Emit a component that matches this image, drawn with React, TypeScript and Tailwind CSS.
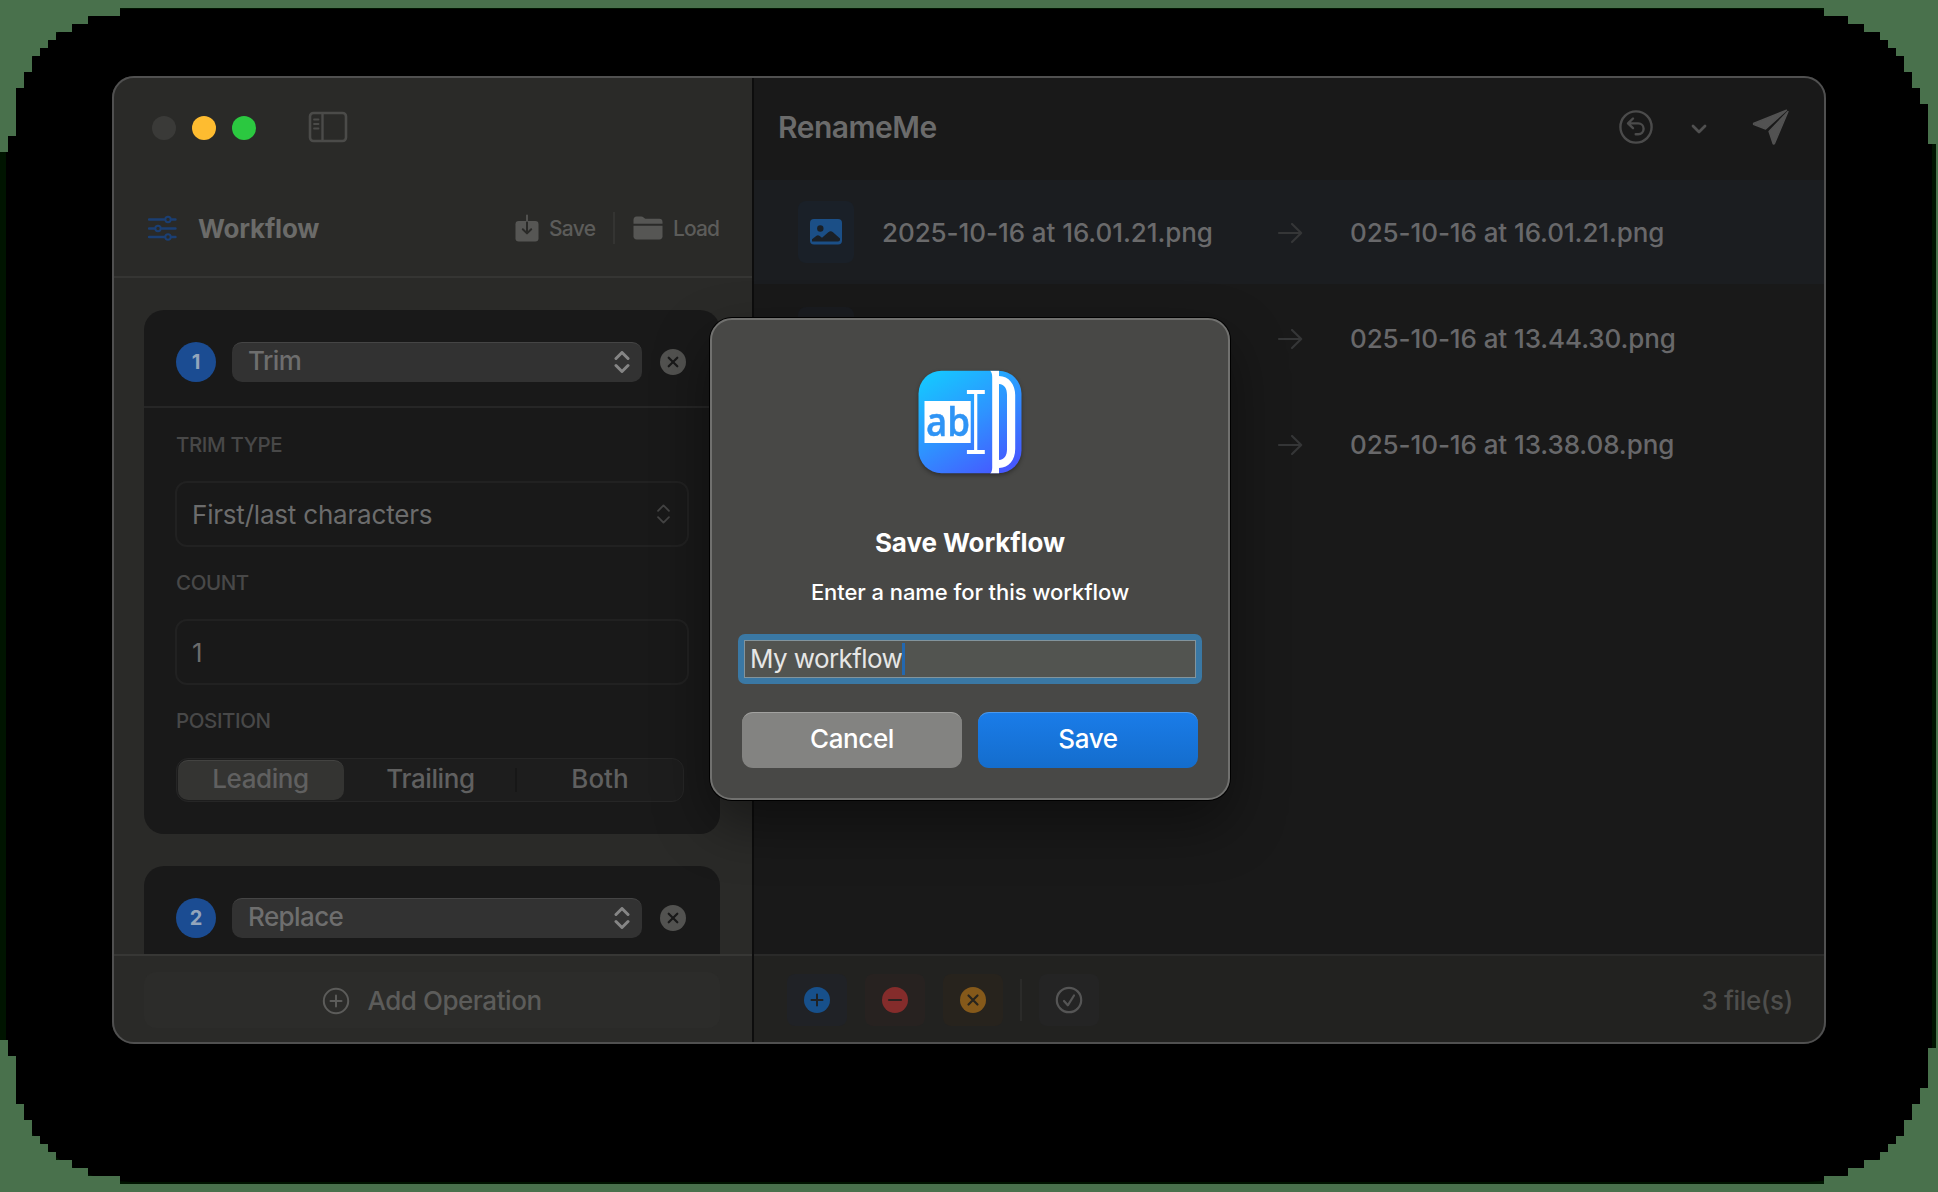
import type { ReactNode } from "react";

function ChevronsUpDown({ className, stroke }: { className: string; stroke: number }) {
  return (
    <svg viewBox="0 0 16 22" className={className} fill="none" stroke="currentColor" strokeWidth={stroke} strokeLinecap="round" strokeLinejoin="round">
      <path d="M2 7.5 8 1.5l6 6M2 14.5l6 6 6-6" />
    </svg>
  );
}

function CloseBadge() {
  return (
    <svg viewBox="0 0 26 26" className="size-[26px] shrink-0">
      <circle cx="13" cy="13" r="13" fill="#525250" />
      <path d="m8.7 8.7 8.6 8.6M17.3 8.7l-8.6 8.6" stroke="#191919" strokeWidth="2.2" strokeLinecap="round" />
    </svg>
  );
}

function SidebarIcon() {
  return (
    <svg viewBox="0 0 40 32" className="h-8 w-10 text-[#4b4b49]" fill="none" stroke="currentColor">
      <rect x="2" y="2" width="36" height="28" rx="3.5" strokeWidth="2.6" />
      <path d="M14.5 2v28" strokeWidth="2.4" />
      <path d="M6 8.5h4.5M6 13h4.5M6 17.5h4.5" strokeWidth="1.8" strokeLinecap="round" />
    </svg>
  );
}

function SlidersIcon() {
  return (
    <svg viewBox="0 0 30 26" className="h-[26px] w-[30px]" fill="none" stroke="#1b3f73" strokeWidth="2.4" strokeLinecap="round">
      <path d="M1 4.5h15.5M23.5 4.5h4M1 13.5h5.5M13.5 13.5h14M1 22h15.5M23.5 22h4" />
      <circle cx="20" cy="4.5" r="2.7" strokeWidth="2" />
      <circle cx="10" cy="13.5" r="2.7" strokeWidth="2" />
      <circle cx="20" cy="22" r="2.7" strokeWidth="2" />
    </svg>
  );
}

function SaveIcon() {
  return (
    <svg viewBox="0 0 24 28" className="h-7 w-6">
      <rect x="0.5" y="7" width="23" height="20.5" rx="3.2" fill="#565654" />
      <path d="M12 7v12M7.8 15.2 12 19.4l4.2-4.2" fill="none" stroke="#2a2a28" strokeWidth="2" strokeLinecap="round" strokeLinejoin="round" />
      <path d="M12 1.5V7" stroke="#565654" strokeWidth="1.8" strokeLinecap="round" />
    </svg>
  );
}

function FolderIcon() {
  return (
    <svg viewBox="0 0 30 24" className="h-6 w-[30px]" fill="#565654">
      <path d="M.5 7.700V3.700C.5 1.800 1.700.5 3.600.5h4.600c1 0 1.700.300 2.400.900l1 .900c.5.400.900.5 1.600.5h13.200c1.900 0 3.100 1.200 3.100 3.100v1.800z" />
      <path d="M.5 9.700h29v10.600c0 1.900-1.200 3.200-3.100 3.200H3.600c-1.900 0-3.100-1.300-3.100-3.200z" />
    </svg>
  );
}

function ImageIcon() {
  return (
    <svg viewBox="0 0 32 26" className="h-[26px] w-8">
      <rect width="32" height="25.5" rx="4" fill="#1b4f87" />
      <circle cx="10.3" cy="9.5" r="3.2" fill="#1a2027" />
      <path d="M2 22.500v-2.200l4.500-3.600c.900-.700 2-.700 2.900 0l2.600 2 6.300-5.400c1.500-1.300 3.200-1.300 4.700 0l7 6.200v1c0 1.300-.700 2-2 2z" fill="#1a2027" />
    </svg>
  );
}

function ArrowIcon() {
  return (
    <svg viewBox="0 0 26 22" className="mt-px h-[22px] w-[26px] shrink-0" fill="none" stroke="#353637" strokeWidth="2.2" strokeLinecap="round" strokeLinejoin="round">
      <path d="M2 11h22M15 2l9.200 9-9.200 9" />
    </svg>
  );
}

function UndoIcon() {
  return (
    <svg viewBox="0 0 36 36" className="size-9" fill="none" stroke="#4b4b4b" strokeLinecap="round" strokeLinejoin="round">
      <circle cx="18" cy="18" r="15.6" strokeWidth="2.4" />
      <path d="M15 9.500 10 14.400l5 4.800M10.500 14.400h9.700c3.200 0 5.400 2.400 5.400 5.400s-2.200 5.400-5.400 5.400h-2.500" strokeWidth="2.4" />
    </svg>
  );
}

function PlaneIcon() {
  return (
    <svg viewBox="0 0 38 38" className="size-[38px]" fill="#525252" stroke="#525252" strokeWidth="1.4" strokeLinejoin="round">
      <path d="M34.500 2.200 2 15.200c-.700.400-.700 1 0 1.400l11.600 4.400z" />
      <path d="M36 3.600 17 23.400l4 12c.300.800 1.100.800 1.500 0z" />
    </svg>
  );
}

function AppIcon() {
  return (
    <svg viewBox="0 0 104 104" className="size-[104px] drop-shadow-[0_2px_2px_rgba(0,0,0,0.35)]">
      <defs>
        <linearGradient id="tile" x1="0.15" y1="0.05" x2="0.75" y2="1">
          <stop offset="0" stopColor="#17c4ff" />
          <stop offset="0.5" stopColor="#2e93ff" />
          <stop offset="1" stopColor="#4659ff" />
        </linearGradient>
        <clipPath id="tile-shape">
          <rect x="0.5" y="0.7" width="103" height="102.6" rx="23" />
        </clipPath>
      </defs>
      <g clipPath="url(#tile-shape)">
        <rect width="104" height="104" fill="url(#tile)" />
        <rect x="6.5" y="31" width="46.2" height="42" fill="#fff" />
        <text x="8" y="66" fontFamily="Open Sans, sans-serif" fontWeight="600" fontSize="39.5" textLength="44" lengthAdjust="spacingAndGlyphs" fill="#2f94f5" stroke="#2f94f5" strokeWidth="0.5">ab</text>
        <path d="M48.900 20h17.900v4h-7.500v56h7.500v4H48.900v-4h7.200V24h-7.200z" fill="#fff" />
        <path d="M72 .5h9v5.500c10 .300 16.200 8.500 16.200 19v54c0 11-6.200 18.800-16.200 19v6h-9c1.600-1.500 2.200-3.500 2.200-6.500V7c0-3-.600-5-2.200-6.500zM81 14v76c5.500-.300 8-4.500 8-11V25c0-6.500-2.500-10.700-8-11z" fill="#fff" />
      </g>
    </svg>
  );
}

function OperationHeader({ index, name }: { index: number; name: string }) {
  return (
    <div className="flex h-24 items-start pt-8 pl-8">
      <div className="flex size-10 shrink-0 items-center justify-center rounded-full bg-[#1b4c92] text-[20px] font-bold text-[#93a5bb]">{index}</div>
      <div className="mr-[18px] ml-4 flex h-10 w-[410px] items-center justify-between rounded-[10px] border-t border-[#454545] bg-[#323232] pr-3 pb-px pl-4 text-[26px] font-medium tracking-[-0.6px] text-[#6e6e6e]">
        <span className="pb-0.5">{name}</span>
        <ChevronsUpDown className="h-[22px] w-4 text-[#858585]" stroke={3} />
      </div>
      <div className="flex h-10 items-center">
        <CloseBadge />
      </div>
    </div>
  );
}

function Label({ children }: { children: ReactNode }) {
  return <div className="flex h-6 items-center pt-0.5 text-[20.5px] font-medium tracking-[-0.4px] text-[#484848]">{children}</div>;
}

function FileRow({ from, to, selected }: { from?: string; to: string; selected?: boolean }) {
  return (
    <div className={selected ? "flex h-[104px] items-center bg-[#1b1d20] pl-[44px]" : "flex h-[104px] items-center pl-[44px]"}>
      <div className={selected ? "flex h-[62px] w-14 items-center justify-center rounded-lg bg-[#1a2028]" : "flex h-[62px] w-14 items-center justify-center rounded-lg bg-[#1a1c20]"}>
        <ImageIcon />
      </div>
      <div className="ml-7 w-[395px] pt-0.5 text-[26px] font-medium tracking-[-0.07px] text-[#6a6a6b]">{from}</div>
      <ArrowIcon />
      <div className="ml-[47px] pt-0.5 text-[26px] font-medium tracking-[-0.09px] text-[#68686a]">{to}</div>
    </div>
  );
}

function ToolButton({ tint, children }: { tint: string; children: ReactNode }) {
  return <div className={`flex h-[52px] w-[60px] items-center justify-center rounded-lg ${tint}`}>{children}</div>;
}

function Dialog() {
  return (
    <div className="absolute top-[242px] left-[598px] flex h-[482px] w-[520px] flex-col items-center rounded-[22px] border-2 border-[#71716f] bg-[#484846] shadow-[0_0_0_1px_#000,0_24px_56px_rgba(0,0,0,0.42)]">
      <div className="mt-[50px] h-[104px]">
        <AppIcon />
      </div>
      <div className="mt-[53px] flex h-8 items-center text-[26px] font-bold tracking-[-0.08px] text-white">Save Workflow</div>
      <div className="mt-[19px] flex h-7 items-center text-[22px] font-medium tracking-[-0.07px] text-white">Enter a name for this workflow</div>
      <div className="mt-7 h-[50px] w-[464px] rounded-[7px] bg-[#3a78a4] p-1.5">
        <div className="flex h-full items-center border border-[#82949c] bg-[#525450] pl-[5px] text-[26px] tracking-[-0.6px] text-[#e6e6e5]">
          <span>My workflow</span>
          <span className="h-8 w-[3px] bg-[#2368b0]" />
        </div>
      </div>
      <div className="mt-7 flex gap-4 text-[26px] font-medium tracking-[-0.4px] text-white">
        <button className="flex h-14 w-[220px] items-center justify-center rounded-[11px] border-t border-[#a2a2a0] bg-[#838381] pb-1">Cancel</button>
        <button className="flex h-14 w-[220px] items-center justify-center rounded-[11px] border-t border-[#4a99ef] bg-linear-to-b from-[#1a7ce8] to-[#146dcd] pb-1">Save</button>
      </div>
    </div>
  );
}

function Sidebar() {
  return (
    <aside className="flex w-[640px] flex-col bg-[#2a2a28]">
      <div className="flex h-[104px] items-center pl-10">
        <div className="flex gap-4">
          <span className="size-6 rounded-full bg-[#3a3a38]" />
          <span className="size-6 rounded-full bg-[#febc30]" />
          <span className="size-6 rounded-full bg-[#2bc840]" />
        </div>
        <div className="ml-[52px] pb-0.5">
          <SidebarIcon />
        </div>
      </div>
      <div className="flex h-24 items-center pl-9">
        <SlidersIcon />
        <div className="ml-5 w-[317px] shrink-0 pt-0.5 text-[26px] font-bold tracking-[-0.2px] text-[#6b6b69]">Workflow</div>
        <SaveIcon />
        <span className="ml-[10px] w-16 shrink-0 text-[21px] font-medium tracking-[-0.7px] text-[#5c5c5a]">Save</span>
        <span className="h-8 w-0.5 bg-[#343432]" />
        <span className="ml-[18px]">
          <FolderIcon />
        </span>
        <span className="ml-[10px] text-[21px] font-medium tracking-[-0.9px] text-[#5c5c5a]">Load</span>
      </div>
      <div className="h-0.5 bg-[#353533]" />
      <div className="flex h-[676px] flex-col gap-8 overflow-hidden px-8 pt-8">
        <section className="h-[524px] shrink-0 rounded-[20px] bg-[#191919]">
          <OperationHeader index={1} name="Trim" />
          <div className="h-0.5 bg-[#262626]" />
          <div className="flex flex-col px-8 pt-6">
            <Label>TRIM TYPE</Label>
            <div className="-ml-px mt-[25px] flex h-[66px] w-[514px] items-center justify-between rounded-xl border-2 border-[#212121] pr-4 pl-[15px] text-[26px] tracking-[-0.2px] text-[#6c6c6c]">
              <span className="pt-0.5">First/last characters</span>
              <ChevronsUpDown className="h-5 w-[15px] text-[#444]" stroke={2} />
            </div>
            <div className="mt-[23px]">
              <Label>COUNT</Label>
            </div>
            <div className="-ml-px mt-[25px] flex h-[66px] w-[514px] items-center rounded-xl border-2 border-[#212121] pt-0.5 pl-[15px] text-[26px] text-[#6c6c6c]">1</div>
            <div className="mt-[23px]">
              <Label>POSITION</Label>
            </div>
            <div className="mt-[26px] flex h-11 w-[508px] items-center rounded-xl border border-[#262626] bg-[#1d1d1d] text-[26px] font-medium tracking-[-0.4px] text-[#606060]">
              <div className="ml-px flex h-10 w-[166px] items-center justify-center rounded-[10px] border-t border-[#434341] bg-[#343432] pr-px pb-[3px]">Leading</div>
              <div className="flex h-10 w-[171px] items-center justify-center pb-0.5 pl-0.5">Trailing</div>
              <div className="h-6 w-0.5 bg-[#171717]" />
              <div className="flex h-10 flex-1 items-center justify-center pb-0.5 tracking-normal">Both</div>
            </div>
          </div>
        </section>
        <section className="h-[300px] shrink-0 rounded-[20px] bg-[#191919]">
          <OperationHeader index={2} name="Replace" />
        </section>
      </div>
      <div className="h-0.5 bg-[#373735]" />
      <div className="px-8 pt-4">
        <div className="flex h-14 items-center justify-center rounded-xl bg-[#2c2c2a] pt-0.5 text-[26px] font-medium tracking-[-0.45px] text-[#5c5c5a]">
          <svg viewBox="0 0 28 28" className="mr-[17px] size-7" fill="none" stroke="currentColor" strokeWidth="2" strokeLinecap="round">
            <circle cx="14" cy="14" r="12.2" />
            <path d="M14 8.500v11M8.500 14h11" />
          </svg>
          Add Operation
        </div>
      </div>
    </aside>
  );
}

function Main() {
  return (
    <main className="flex w-[1072px] flex-col bg-[#191919]">
      <div className="flex h-[104px] items-center pr-9 pb-0.5 pl-6">
        <h1 className="flex-1 text-[30px] font-semibold tracking-[-0.5px] text-[#6b6b6b]">RenameMe</h1>
        <UndoIcon />
        <svg viewBox="0 0 16 10" className="mt-[3px] mr-[45px] ml-[37px] h-2.5 w-4" fill="none" stroke="#505050" strokeWidth="2.8" strokeLinecap="round" strokeLinejoin="round">
          <path d="m2 2 6 6 6-6" />
        </svg>
        <PlaneIcon />
      </div>
      <div className="flex flex-1 flex-col gap-0.5">
        <FileRow selected from="2025-10-16 at 16.01.21.png" to="025-10-16 at 16.01.21.png" />
        <FileRow to="025-10-16 at 13.44.30.png" />
        <FileRow to="025-10-16 at 13.38.08.png" />
      </div>
      <div className="flex h-[90px] items-center border-t-2 border-[#2a2a29] bg-[#222220] pr-[33px] pl-[33px]">
        <div className="flex gap-[18px]">
          <ToolButton tint="bg-[#202226]">
            <svg viewBox="0 0 26 26" className="size-[26px]">
              <circle cx="13" cy="13" r="13" fill="#17508b" />
              <path d="M13 7.500v11M7.500 13h11" stroke="#1f2226" strokeWidth="2" strokeLinecap="round" />
            </svg>
          </ToolButton>
          <ToolButton tint="bg-[#272220]">
            <svg viewBox="0 0 26 26" className="size-[26px]">
              <circle cx="13" cy="13" r="13" fill="#842c2b" />
              <path d="M7 13h12" stroke="#292220" strokeWidth="2.2" strokeLinecap="round" />
            </svg>
          </ToolButton>
          <ToolButton tint="bg-[#27231d]">
            <svg viewBox="0 0 26 26" className="size-[26px]">
              <circle cx="13" cy="13" r="13" fill="#85591a" />
              <path d="m8.500 8.500 9 9M17.500 8.500l-9 9" stroke="#28241d" strokeWidth="2.2" strokeLinecap="round" />
            </svg>
          </ToolButton>
        </div>
        <div className="mx-[17px] h-[42px] w-0.5 bg-[#2b2b29]" />
        <ToolButton tint="bg-[#242424]">
          <svg viewBox="0 0 28 28" className="size-7" fill="none" stroke="#555555" strokeWidth="2.2" strokeLinecap="round" strokeLinejoin="round">
            <circle cx="14" cy="14" r="12.2" />
            <path d="m9 15 3.800 4.300L19 9.500" />
          </svg>
        </ToolButton>
        <div className="ml-auto pt-0.5 text-[26px] font-medium tracking-[-0.35px] text-[#4e4e4c]">3 file(s)</div>
      </div>
    </main>
  );
}

export default function App() {
  return (
    <div className="h-[1192px] w-[1938px] overflow-hidden bg-[#49714c] font-[Inter,sans-serif] leading-none">
      <div className="h-[1192px] w-[1938px] bg-[#001400] pt-[9px] pr-[6px] pb-[10px] pl-[6px] [clip-path:polygon(120px_8px,1824px_8px,1824px_16px,1848px_16px,1848px_24px,1864px_24px,1864px_32px,1880px_32px,1880px_40px,1888px_40px,1888px_48px,1896px_48px,1896px_56px,1904px_56px,1904px_72px,1912px_72px,1912px_88px,1920px_88px,1920px_104px,1928px_104px,1928px_144px,1936px_144px,1936px_1048px,1928px_1048px,1928px_1088px,1920px_1088px,1920px_1104px,1912px_1104px,1912px_1120px,1904px_1120px,1904px_1136px,1896px_1136px,1896px_1144px,1888px_1144px,1888px_1152px,1880px_1152px,1880px_1160px,1864px_1160px,1864px_1168px,1848px_1168px,1848px_1176px,1824px_1176px,1824px_1184px,120px_1184px,120px_1176px,88px_1176px,88px_1168px,72px_1168px,72px_1160px,56px_1160px,56px_1152px,48px_1152px,48px_1144px,40px_1144px,40px_1136px,32px_1136px,32px_1120px,24px_1120px,24px_1104px,16px_1104px,16px_1056px,8px_1056px,8px_1040px,0px_1040px,0px_152px,8px_152px,8px_136px,16px_136px,16px_88px,24px_88px,24px_72px,32px_72px,32px_56px,40px_56px,40px_48px,48px_48px,48px_40px,56px_40px,56px_32px,72px_32px,72px_24px,88px_24px,88px_16px,120px_16px)]">
        <div className="h-full rounded-[125px] bg-black pt-[67px] pl-[106px]">
          <div className="relative h-[968px] w-[1714px]">
            <div className="flex h-full overflow-hidden rounded-[22px]">
              <Sidebar />
              <div className="w-0.5 bg-[#0d0d0d]" />
              <Main />
            </div>
            <div className="pointer-events-none absolute inset-0 rounded-[22px] border-2 border-[#505050]" />
            <Dialog />
          </div>
        </div>
      </div>
    </div>
  );
}
